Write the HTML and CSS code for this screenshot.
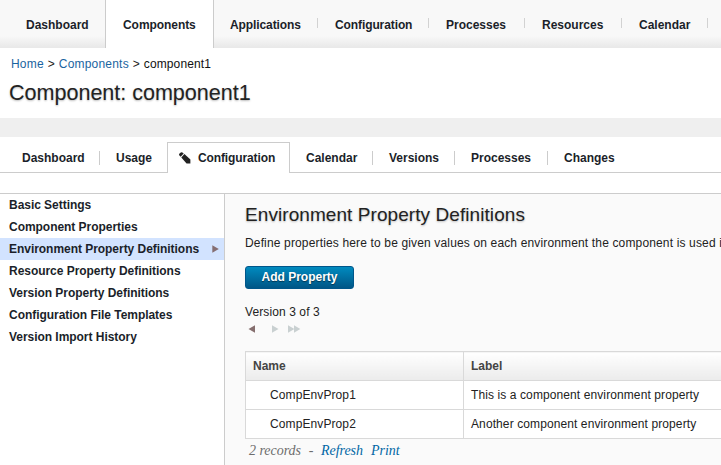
FILE: index.html
```html
<!DOCTYPE html>
<html lang="en">
<head>
<meta charset="utf-8">
<title>Component: component1</title>
<link rel="stylesheet" href="styles.css">
</head>
<body>
<nav class="topnav">
  <a class="tab dash"><span>Dashboard</span></a>
  <a class="tab comp active"><span>Components</span></a>
  <a class="tab apps sep"><span>Applications</span></a>
  <a class="tab conf sep"><span>Configuration</span></a>
  <a class="tab proc sep"><span>Processes</span></a>
  <a class="tab res sep"><span>Resources</span></a>
  <a class="tab cal sep"><span>Calendar</span></a>
</nav>
<header class="heading">
  <div class="crumbs"><a>Home</a><i>&gt;</i><a>Components</a><i>&gt;</i><b>component1</b></div>
  <h1><span>Component: component1</span></h1>
</header>
<div class="band"></div>
<nav class="subnav">
  <a class="sub s-dash line"><span>Dashboard</span></a>
  <a class="sub s-usage"><span>Usage</span></a>
  <a class="sub s-conf current"><svg class="pencil" width="12" height="12" viewBox="0 0 12 12"><path d="M0 3Q0 2.2.5 1.6L1.8.5Q2.6-.1 3.4.5L4.7 1.6 1.7 4.7Z"/><path d="M5.4 2.1 11.4 7.6V11.5H7.6L2.3 5.4Z"/></svg><span>Configuration</span></a>
  <a class="sub s-cal line"><span>Calendar</span></a>
  <a class="sub s-ver line"><span>Versions</span></a>
  <a class="sub s-proc line"><span>Processes</span></a>
  <a class="sub s-chg"><span>Changes</span></a>
</nav>
<div class="body">
  <aside class="side">
    <a>Basic Settings</a>
    <a>Component Properties</a>
    <a class="selected"><span>Environment Property Definitions</span><svg width="7" height="8" viewBox="0 0 7 8"><path d="M.3.3 6.8 4 .3 7.7Z"/></svg></a>
    <a>Resource Property Definitions</a>
    <a>Version Property Definitions</a>
    <a>Configuration File Templates</a>
    <a>Version Import History</a>
  </aside>
  <main class="main">
    <h2><span>Environment Property Definitions</span></h2>
    <p class="desc">Define properties here to be given values on each environment the component is used in.</p>
    <button class="add" type="button"><span>Add Property</span></button>
    <div class="version">Version 3 of 3</div>
    <div class="pager">
      <svg width="60" height="8" viewBox="0 0 60 8"><path class="on" d="M10 .3 3.5 4 10 7.7Z"/><path class="off" d="M27 .3 33.5 4 27 7.7ZM43 .3 49 3.8V.3L55.3 4 49 7.7V4.2L43 7.7Z"/></svg>
    </div>
    <table class="grid">
      <tr><th class="name">Name</th><th>Label</th></tr>
      <tr><td class="indent">CompEnvProp1</td><td>This is a component environment property</td></tr>
      <tr><td class="indent">CompEnvProp2</td><td class="second">Another component environment property</td></tr>
    </table>
    <div class="foot"><span class="count">2 records</span><span class="dash-mark">-</span><a class="refresh">Refresh</a><a>Print</a></div>
  </main>
</div>
</body>
</html>
```
FILE: styles.css
```css
* { box-sizing: border-box; }
body {
  margin: 0;
  height: 465px;
  overflow: hidden;
  background: #fff;
  color: #222;
  font: 12px/16px "Liberation Sans", Arial, sans-serif;
}
a { color: #1b1f2a; text-decoration: none; white-space: nowrap; }
span { white-space: nowrap; }

.topnav {
  display: flex;
  height: 48px;
  padding-left: 9px;
  background: linear-gradient(#f8f8f8 0, #f8f8f8 36px, #e8e8e8 48px);
  font-weight: bold;
}
.tab { display: flex; flex: none; justify-content: flex-start; padding: 17px 0 0 17px; }
.dash { width: 96px; }
.comp { width: 109px; letter-spacing: -0.06px; }
.apps { width: 104px; padding-left: 16px; letter-spacing: -0.1px; }
.conf { width: 111px; letter-spacing: -0.1px; }
.proc { width: 96px; }
.res { width: 97px; }
.cal { width: 86px; }
.active { background: #fff; border: solid #ccc; border-width: 0 1px; }
.sep {
  background: linear-gradient(#d2d2d2, #d2d2d2) right 18px / 1px 10px no-repeat;
}

.heading { height: 70px; padding: 8px 9px 0; }
.crumbs { display: flex; padding-left: 2px; letter-spacing: 0.2px; }
.crumbs a { color: #1a64a0; }
.crumbs i { width: 15px; text-align: center; font-style: normal; }
.crumbs b { font-weight: normal; color: #111; letter-spacing: 0.1px; }
h1, h2 { margin: 0; font-weight: normal; color: #222; text-shadow: 0 1px 2px #bbb; }
h1 { margin-top: 7px; font-size: 21.6px; line-height: 28px; letter-spacing: -0.04px; }
.band { height: 19px; background: #efefef; }

.subnav {
  display: flex;
  height: 36px;
  padding-top: 5px;
  background: linear-gradient(#ccc, #ccc) left 35px / 100% 1px no-repeat;
  font-weight: bold;
}
.sub { display: flex; flex: none; height: 31px; padding: 8px 0 0 16px; }
.s-dash { width: 100px; padding-left: 22px; }
.s-usage { width: 67px; }
.s-conf { width: 123px; padding-left: 11px; letter-spacing: -0.12px; }
.s-cal { width: 83px; }
.s-ver { width: 82px; }
.s-proc { width: 93px; }
.line { background: linear-gradient(#ccc, #ccc) right 9px / 1px 14px no-repeat; }
.current { background: #fff; border: 1px solid #ccc; border-bottom: 0; padding-top: 7px; }
.sub .pencil { flex: none; width: 12px; margin: 2px 7px 0 0; fill: #222; }

.body { display: flex; height: 272px; margin-top: 20px; border-top: 1px solid #ccc; }
.side { width: 225px; flex: none; border-right: 1px solid #ccc; letter-spacing: -0.04px; }
.side a { display: flex; height: 22px; padding: 3px 5px 0 9px; font-weight: bold; }
.side .selected { justify-content: space-between; background: #d2e3ff; }
.side svg { margin-top: 4px; fill: #856e72; }

.main { flex: 1; min-width: 0; overflow: hidden; padding-left: 20px; background: #fafafa; }
h2 { margin-top: 9px; font-size: 19px; line-height: 24px; letter-spacing: 0.07px; }
.desc { margin: 8px 0 0; white-space: nowrap; letter-spacing: 0.15px; }
.add {
  display: block;
  width: 109px;
  height: 23px;
  margin-top: 15px;
  padding: 0 0 1px;
  border: 1px solid #00568a;
  border-radius: 3px;
  background: linear-gradient(#008abf, #005686);
  color: #fff;
  font: bold 12px/20px "Liberation Sans", Arial, sans-serif;
  text-shadow: 0 1px 1px #003450;
}
.version { margin-top: 15px; letter-spacing: 0.1px; }
.pager { height: 8px; margin-top: 5px; }
.pager svg { display: block; }
.on { fill: #856e6e; }
.off { fill: #c9d0d1; }

.grid {
  width: 540px;
  margin-top: 18px;
  border-collapse: collapse;
  table-layout: fixed;
  background: #fff;
}
.grid th, .grid td {
  height: 29px;
  padding: 0 7px;
  border: 1px solid #d9d9d9;
  text-align: left;
  white-space: nowrap;
}
.grid th { background: linear-gradient(#fff, #ebebeb); color: #444; }
.grid td { letter-spacing: 0.1px; }
.grid .name { width: 218px; }
.grid td.indent { padding-left: 24px; }

.foot {
  display: flex;
  padding: 4px 0 0 4px;
  font: italic 14px/16px "Liberation Serif", serif;
  letter-spacing: -0.03px;
  color: #6d6d6d;
}
.foot a { color: #0067a5; }
.dash-mark { width: 20px; text-align: center; }
.foot .refresh { margin-right: 8px; }
```
